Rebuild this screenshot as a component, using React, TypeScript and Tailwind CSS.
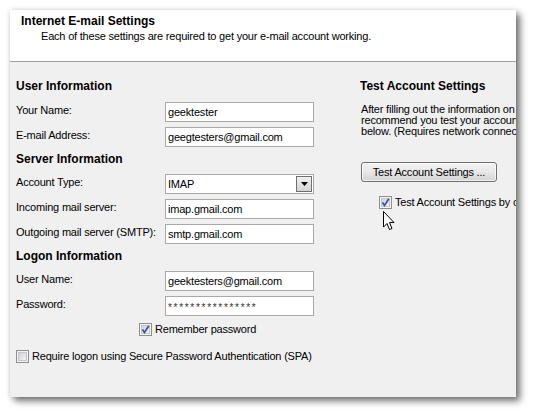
import React from 'react';

const Check = ({ checked }: { checked?: boolean }) => (
    <svg width="13" height="13" viewBox="0 0 13 13" className="shrink-0">
        <defs>
            <linearGradient id="cbg" x1="0" y1="0" x2="1" y2="1">
                <stop offset="0" stopColor="#cbcfd5" />
                <stop offset="1" stopColor="#f6f6f6" />
            </linearGradient>
        </defs>
        <rect x="0.5" y="0.5" width="12" height="12" fill="#f4f4f4" stroke="#8f8f8f" />
        <rect x="2.5" y="2.5" width="8" height="8" fill="url(#cbg)" stroke="#c6c6c6" />
        {checked && <path d="M3.5 6.5 L5.5 9.5 L9.8 2.8" fill="none" stroke="#3a55a0" strokeWidth="1.7" />}
    </svg>
);

const Field = ({ value, small }: { value: string; small?: boolean }) => (
    <div className="w-[149px] h-[20px] bg-white border border-[#a9a9a9] flex items-center pl-[2px] overflow-hidden whitespace-nowrap">
        <span className={small ? 'text-[10px] tracking-[1.7px] text-[#333] pt-[2px]' : ''}>{value}</span>
    </div>
);

const Row = ({ label, children }: { label: string; children: React.ReactNode }) => (
    <div className="flex items-start h-[20px] mb-[5px]">
        <div className="w-[149px] leading-[14px] pt-[1px]">{label}</div>
        {children}
    </div>
);

const Heading = ({ children, className }: { children: React.ReactNode; className?: string }) => (
    <div className={`font-bold text-[12px] tracking-[0px] leading-[14px] ${className ?? ''}`}>{children}</div>
);

export default function App() {
    return (
        <div
            className="w-[534px] h-[415px] bg-white pl-[10px] pt-[10px] text-[11px] tracking-[-0.2px] text-black overflow-hidden"
            style={{ fontFamily: '"Liberation Sans", Arial, sans-serif' }}
        >
            <div className="w-[506px] h-[387px] flex flex-col bg-[#f0f0f0] shadow-[4px_4px_7px_rgba(0,0,0,0.55),0_0_5px_rgba(0,0,0,0.12)] relative">
                <div className="h-[52px] bg-white border-b border-[#a0a0a0] pl-[11px] pt-[4px]">
                    <div className="font-bold text-[12px] leading-[14px] tracking-[0px]">Internet E-mail Settings</div>
                    <div className="pl-[20px] leading-[14px] pt-[1px]">
                        Each of these settings are required to get your e-mail account working.
                    </div>
                </div>
                <div className="flex flex-1">
                    <div className="w-[350px] pl-[6px] pt-[17px]">
                        <Heading className="mb-[9px]">User Information</Heading>
                        <Row label="Your Name:">
                            <Field value="geektester" />
                        </Row>
                        <Row label="E-mail Address:">
                            <Field value="geegtesters@gmail.com" />
                        </Row>
                        <Heading className="mt-[4px] mb-[8px]">Server Information</Heading>
                        <Row label="Account Type:">
                            <div className="w-[149px] h-[20px] bg-white border border-[#a9a9a9] flex items-center justify-between pl-[2px] pr-[1px]">
                                <span>IMAP</span>
                                <div className="w-[16px] h-[16px] border border-[#6f6f6f] bg-gradient-to-b from-[#f0f0f0] to-[#d4d4d4] flex items-center justify-center">
                                    <svg width="7" height="4" viewBox="0 0 7 4">
                                        <path d="M0 0 H7 L3.5 4 Z" fill="#000" />
                                    </svg>
                                </div>
                            </div>
                        </Row>
                        <Row label="Incoming mail server:">
                            <Field value="imap.gmail.com" />
                        </Row>
                        <Row label="Outgoing mail server (SMTP):">
                            <Field value="smtp.gmail.com" />
                        </Row>
                        <Heading className="mt-[3px] mb-[8px]">Logon Information</Heading>
                        <Row label="User Name:">
                            <Field value="geektesters@gmail.com" />
                        </Row>
                        <Row label="Password:">
                            <Field value="****************" small />
                        </Row>
                        <div className="flex items-center gap-[3px] h-[13px] mt-[7px] pl-[123px]">
                            <Check checked />
                            <span className="leading-[13px]">Remember password</span>
                        </div>
                        <div className="flex items-center gap-[3px] h-[13px] mt-[14px]">
                            <Check />
                            <span className="leading-[13px]">Require logon using Secure Password Authentication (SPA)</span>
                        </div>
                    </div>
                    <div className="flex-1 pt-[17px] overflow-hidden whitespace-nowrap relative">
                        <Heading>Test Account Settings</Heading>
                        <div className="mt-[11px] leading-[11px] pl-[1px]">
                            After filling out the information on this screen, we
                            <br />
                            recommend you test your account by clicking the button
                            <br />
                            below. (Requires network connection)
                        </div>
                        <div className="mt-[25px] ml-[1px] w-[136px] h-[20px] rounded-[3px] border border-[#707070] bg-gradient-to-b from-[#f3f3f3] via-[#e8e8e8] to-[#d2d2d2] flex items-center justify-center shadow-[inset_0_0_0_1px_rgba(255,255,255,0.7)]">
                            Test Account Settings ...
                        </div>
                        <div className="flex items-center gap-[3px] h-[13px] mt-[14px] pl-[19px]">
                            <Check checked />
                            <span className="leading-[13px]">Test Account Settings by clicking the Next button</span>
                        </div>
                        <svg className="absolute left-[23px] top-[149px]" width="12" height="20" viewBox="0 0 12 20">
                            <path d="M0.5 0.5 V16 L4 12.5 L6.5 18.5 L9 17.5 L6.5 11.5 H11 Z" fill="#fff" stroke="#000" strokeWidth="1" strokeLinejoin="round" />
                        </svg>
                    </div>
                </div>
            </div>
        </div>
    );
}
